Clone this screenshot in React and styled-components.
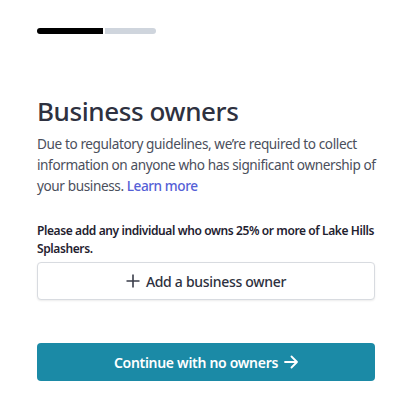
import React from "react";
import styled, { createGlobalStyle } from "styled-components";

const GlobalStyle = createGlobalStyle`
  body {
    margin: 0;
    background: #fff;
    font-family: "Noto Sans", "Open Sans", sans-serif;
  }
`;

const Page = styled.div`
  width: 344px;
  padding: 28px 0 0 37px;
`;

const Progress = styled.div`
  display: flex;
  gap: 2px;
  width: 119px;
  height: 6px;
`;

const Segment = styled.div`
  flex: ${(p) => p.grow};
  background: ${(p) => (p.done ? "#000" : "#cfd5dd")};
  border-radius: ${(p) => (p.done ? "3px 0 0 3px" : "0 3px 3px 0")};
`;

const Heading = styled.h1`
  margin: 60px 0 0;
  font-size: 26px;
  font-weight: 500;
  line-height: 34px;
  letter-spacing: -0.4px;
  color: #2e3140;
`;

const Intro = styled.p`
  margin: 5px 0 0;
  font-size: 13.6px;
  line-height: 21px;
  letter-spacing: -0.4px;
  color: #4b4f5c;
`;

const Link = styled.a`
  margin-left: 3px;
  color: #5560d6;
  font-weight: 500;
  text-decoration: none;
`;

const Note = styled.p`
  margin: 26px 0 0;
  width: 338px;
  font-size: 12px;
  font-weight: 600;
  line-height: 18px;
  letter-spacing: -0.4px;
  color: #1f2230;
`;

const Button = styled.button`
  display: flex;
  align-items: center;
  justify-content: center;
  gap: 6px;
  width: 338px;
  height: 38px;
  border-radius: 4px;
  font-family: inherit;
  font-size: 14px;
  letter-spacing: -0.3px;
  cursor: pointer;
`;

const OutlineButton = styled(Button)`
  margin-top: 4px;
  background: #fff;
  border: 1px solid #d8dbe0;
  box-shadow: 0 1px 2px rgba(0, 0, 0, 0.08);
  color: #2e3140;
  font-weight: 500;
`;

const PrimaryButton = styled(Button)`
  margin-top: 43px;
  background: #1b8aa6;
  border: none;
  color: #fff;
  font-weight: 600;
`;

const Plus = () => (
  <svg width="14" height="14" viewBox="0 0 14 14" fill="none" stroke="#3a3d4a" strokeWidth="1.6">
    <path d="M7 0.5v13M0.5 7h13" />
  </svg>
);

const Arrow = () => (
  <svg width="14" height="14" viewBox="0 0 14 14" fill="none" stroke="#fff" strokeWidth="1.8" strokeLinecap="round" strokeLinejoin="round">
    <path d="M1 7h12M7.5 1.5L13 7l-5.5 5.5" />
  </svg>
);

const App = () => {
  return (
    <Page>
      <GlobalStyle />
      <Progress>
        <Segment done grow={66} />
        <Segment grow={51} />
      </Progress>
      <Heading>Business owners</Heading>
      <Intro>
        Due to regulatory guidelines, we’re required to collect information on
        anyone who has significant ownership of your business.
        <Link href="#">Learn more</Link>
      </Intro>
      <Note>
        Please add any individual who owns 25% or more of Lake Hills Splashers.
      </Note>
      <OutlineButton>
        <Plus />
        Add a business owner
      </OutlineButton>
      <PrimaryButton>
        Continue with no owners
        <Arrow />
      </PrimaryButton>
    </Page>
  );
};

export default App;
